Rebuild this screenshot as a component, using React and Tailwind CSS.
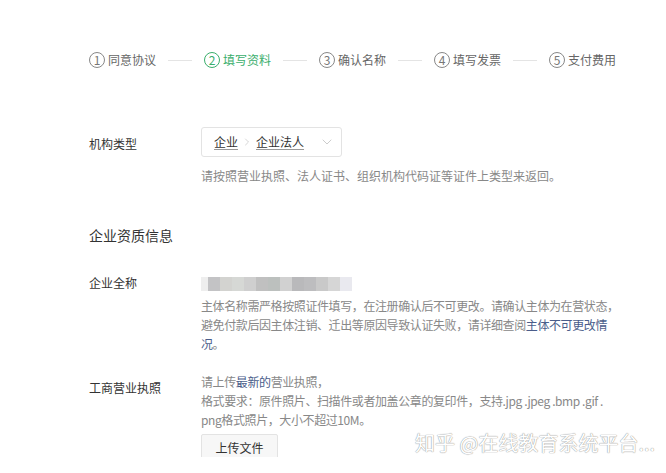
import { ChevronDown, ChevronRight } from "lucide-react"

const steps = ["同意协议", "填写资料", "确认名称", "填写发票", "支付费用"]
const blur = ["#c3c3c5", "#d3d3d0", "#d6d8d5", "#cfcfcf", "#c0c0c0", "#bcc0be", "#d1d1d1", "#b9b9bb", "#bdbdbf", "#c9c9c9", "#d6d6d6", "#e9e9ef"]

function Step({ n, label, active }) {
  const color = active ? "text-[#3aae6c] border-[#3aae6c]" : "text-[#777] border-[#888]"
  return (
    <div className={`flex items-center gap-[3px] ${active ? "text-[#3aae6c]" : "text-[#666]"}`}>
      <span className={`w-[16px] h-[16px] rounded-full border flex items-center justify-center text-[12px] leading-none ${color}`}>
        {n}
      </span>
      <span className="text-[12px]">{label}</span>
    </div>
  )
}

function Row({ label, children, className = "" }) {
  return (
    <div className={`flex ${className}`}>
      <div className="w-[112px] shrink-0 text-[12px] text-[#333]">{label}</div>
      <div className="flex-1">{children}</div>
    </div>
  )
}

export default function App() {
  return (
    <div
      className="relative w-[666px] h-[473px] bg-white overflow-hidden"
      style={{ fontFamily: '"Noto Sans CJK SC", "Noto Sans", sans-serif' }}
    >
      <div className="h-[457px] overflow-hidden pl-[89px] pr-[40px]">
        {/* steps */}
        <div className="flex items-center pt-[51px] h-[69px]">
          {steps.map((s, i) => (
            <div key={s} className="flex items-center">
              <Step n={i + 1} label={s} active={i === 1} />
              {i < steps.length - 1 && <div className="w-[24px] h-px bg-[#e4e4e4] mx-[12px]" />}
            </div>
          ))}
        </div>

        {/* org type */}
        <Row label="机构类型" className="mt-[66px] items-start">
          <div className="-mt-[8px]">
            <div className="w-[141px] h-[30px] border border-[#e3e3e3] rounded-[3px] flex items-center pl-[12px] pr-[6px] text-[12px] text-[#333]">
              <span className="underline underline-offset-2 decoration-[#999]">企业</span>
              <ChevronRight size={12} strokeWidth={1.2} className="text-[#bbb] mx-[3px]" />
              <span className="underline underline-offset-2 decoration-[#999]">企业法人</span>
              <ChevronDown size={16} strokeWidth={0.9} className="text-[#aaa] ml-auto" />
            </div>
            <p className="mt-[10px] text-[12px] text-[#888]">请按照营业执照、法人证书、组织机构代码证等证件上类型来返回。</p>
          </div>
        </Row>

        <h2 className="mt-[40px] text-[14px] text-[#333]">企业资质信息</h2>

        {/* full name */}
        <Row label="企业全称" className="mt-[28px]">
          <div className="flex h-[14px] mt-[3px]">
            <div className="w-[7px] bg-[#eeeeee]" />
            {blur.map((c, i) => (
              <div key={i} className="w-[12px]" style={{ background: c }} />
            ))}
          </div>
          <div className="mt-[5px] text-[12px] leading-[19px] text-[#888] tracking-[-0.4px] whitespace-nowrap">
            <p>主体名称需严格按照证件填写，在注册确认后不可更改。请确认主体为在营状态，</p>
            <p>
              避免付款后因主体注销、迁出等原因导致认证失败，请详细查阅<span className="text-[#4a5d8a]">主体不可更改情</span>
            </p>
            <p>
              <span className="text-[#4a5d8a]">况</span>。
            </p>
          </div>
        </Row>

        {/* license */}
        <Row label="工商营业执照" className="mt-[26px]">
          <div className="-mt-[7px] text-[12px] leading-[19px] text-[#888] tracking-[-0.4px] whitespace-nowrap">
            <p>
              请上传<span className="text-[#4a5d8a]">最新的</span>营业执照，
            </p>
            <p>格式要求：原件照片、扫描件或者加盖公章的复印件，支持.jpg .jpeg .bmp .gif .</p>
            <p>png格式照片，大小不超过10M。</p>
            <button className="mt-[5px] w-[77px] h-[28px] border border-[#e3e3e3] rounded-[2px] bg-[#f7f7f7] text-[12px] leading-[16px] text-[#333] tracking-normal">
              上传文件
            </button>
          </div>
        </Row>
      </div>

      {/* watermark */}
      <div
        className="absolute left-[415px] top-[428px] text-[20px] whitespace-nowrap text-white"
        style={{ textShadow: "0 0 1px #999, 0 0 1px #999" }}
      >
        知乎 @在线教育系统平台...
      </div>
    </div>
  )
}
